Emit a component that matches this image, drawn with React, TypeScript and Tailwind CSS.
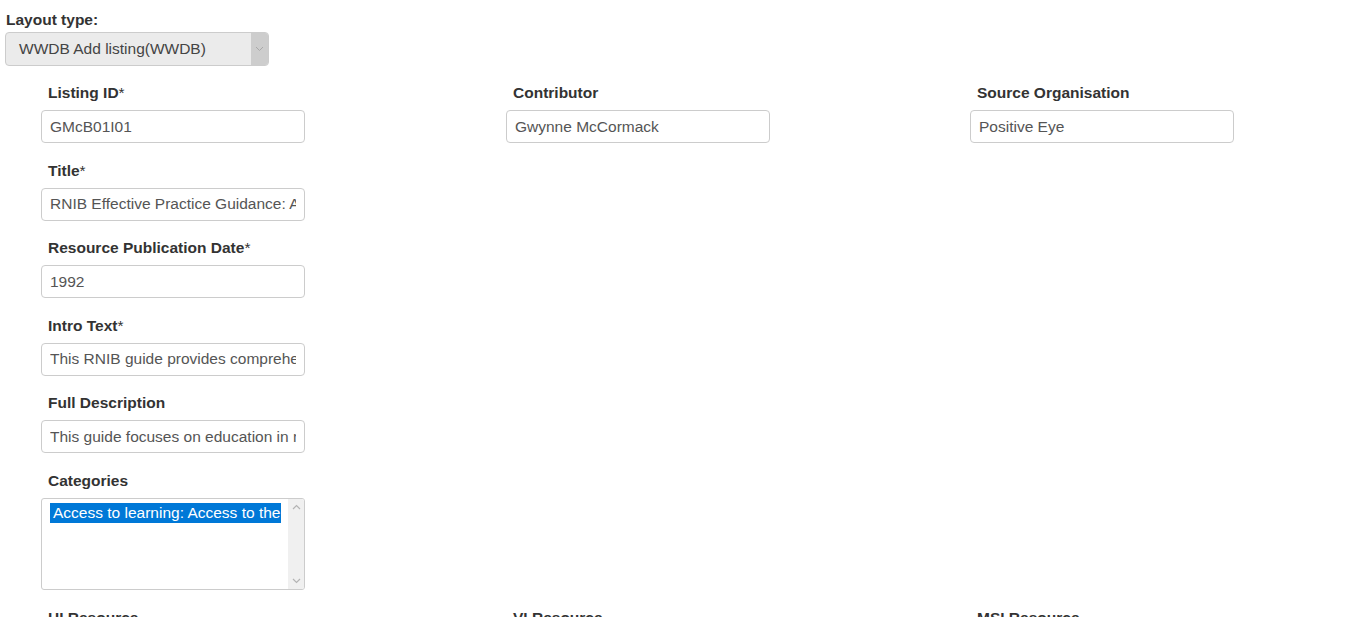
import React from "react"

const font = { fontFamily: '"Liberation Sans", Arial, sans-serif' }

function Label({ text, req }: { text: string; req?: boolean }) {
  return (
    <div className="h-5 leading-5 pl-[7px] mb-[7px] text-[15.5px] font-bold text-[#333] whitespace-nowrap">
      {text}
      {req && <span className="font-normal">*</span>}
    </div>
  )
}

function Field({ label, req, value, className = "" }: { label: string; req?: boolean; value: string; className?: string }) {
  return (
    <div className={"mb-[17.6px] " + className}>
      <Label text={label} req={req} />
      <input
        readOnly
        value={value}
        className="block w-[264px] h-[33px] px-2 border border-[#ccc] rounded-[4px] bg-white text-[15.5px] text-[#555] outline-none"
        style={font}
      />
    </div>
  )
}

export default function App() {
  return (
    <div className="h-[617px] w-[1363px] overflow-hidden bg-white" style={font}>
      {/* Layout type */}
      <div className="pt-[10px] pl-[5px]">
        <div className="h-5 leading-5 pl-px mb-[2px] text-[15.5px] font-bold text-[#333]">Layout type:</div>
        <div className="flex w-[264px] h-[34px] border border-[#ccc] rounded-[4px] bg-[#ebebeb] overflow-hidden">
          <div className="flex-1 flex items-center pl-[13px] text-[15.5px] text-[#444]">WWDB Add listing(WWDB)</div>
          <div className="w-[17px] bg-[#cdcdcd] flex items-center justify-center">
            <svg width="9" height="6" viewBox="0 0 9 6">
              <path d="M1 1l3.5 3.5L8 1" fill="none" stroke="#a8a8a8" strokeWidth="1" />
            </svg>
          </div>
        </div>
      </div>

      {/* Form */}
      <div className="grid grid-cols-[465px_464px_1fr] pl-[41px] pt-[17px]">
        <Field label="Listing ID" req value="GMcB01I01" />
        <Field label="Contributor" value="Gwynne McCormack" />
        <Field label="Source Organisation" value="Positive Eye" />

        <Field className="col-start-1" label="Title" req value="RNIB Effective Practice Guidance: Access to the curriculum" />
        <Field className="col-start-1" label="Resource Publication Date" req value="1992" />
        <Field className="col-start-1" label="Intro Text" req value="This RNIB guide provides comprehensive guidance" />
        <Field className="col-start-1" label="Full Description" value="This guide focuses on education in mainstream schools" />

        <div className="col-start-1 mb-[17.6px]">
          <Label text="Categories" />
          <div className="flex w-[264px] h-[92px] border border-[#ccc] rounded-[3px] bg-white overflow-hidden">
            <div className="flex-1 overflow-hidden pl-2 pt-[4px]">
              <div className="h-5 leading-5 w-[231px] bg-[#0078d7] text-white text-[15.5px] pl-[3px] whitespace-nowrap overflow-hidden">
                Access to learning: Access to the curriculum
              </div>
            </div>
            <div className="w-[16px] bg-[#f0f0f0] flex flex-col items-center justify-between py-[5px]">
              <svg width="9" height="6" viewBox="0 0 9 6">
                <path d="M1 5l3.5-3.5L8 5" fill="none" stroke="#b4b4b4" strokeWidth="1.2" />
              </svg>
              <svg width="9" height="6" viewBox="0 0 9 6">
                <path d="M1 1l3.5 3.5L8 1" fill="none" stroke="#b4b4b4" strokeWidth="1.2" />
              </svg>
            </div>
          </div>
        </div>

        <div className="col-start-1">
          <Label text="HI Resource" />
        </div>
        <Label text="VI Resource" />
        <Label text="MSI Resource" />
      </div>
    </div>
  )
}
